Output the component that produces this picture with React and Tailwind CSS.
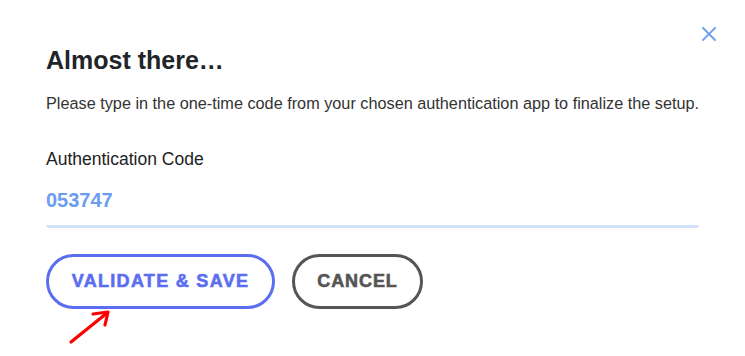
import React from "react";

export default function App() {
  return (
    <div className="relative w-[745px] h-[356px] bg-white overflow-hidden" style={{ fontFamily: '"Liberation Sans", Arial, sans-serif' }}>
      <button className="absolute right-[28px] top-[26px] text-[#6b9cf0]">
        <svg width="16" height="16" viewBox="0 0 16 16" fill="none" stroke="currentColor" strokeWidth="1.8" strokeLinecap="square">
          <path d="M2 2 L14 14 M14 2 L2 14" />
        </svg>
      </button>
      <div className="flex flex-col pl-[46px] pr-[46px] pt-[45px]">
        <h1 className="text-[25px] leading-[30px] font-bold text-[#212529]">Almost there…</h1>
        <p className="mt-[17px] text-[16.25px] leading-[22px] text-[#333] whitespace-nowrap">
          Please type in the one-time code from your chosen authentication app to finalize the setup.
        </p>
        <label className="mt-[33px] text-[17.5px] leading-[24px] text-[#222]">Authentication Code</label>
        <div className="mt-[17px] w-[653px] border-b-[3px] border-[#d4e3fc] rounded-b-[3px] pb-[13px]">
          <span className="block text-[20px] leading-[24px] font-bold text-[#6b9cf0]">053747</span>
        </div>
        <div className="mt-[26px] flex gap-[17px]">
          <button className="w-[229px] h-[55px] rounded-full border-[3px] border-[#5b6ef0] text-[#5b6ef0] text-[18px] font-bold tracking-[1.3px] uppercase [-webkit-text-stroke:0.6px_#5b6ef0]">
            Validate &amp; Save
          </button>
          <button className="w-[131px] h-[55px] rounded-full border-[3px] border-[#555] text-[#555] text-[18px] font-bold tracking-[0.9px] uppercase [-webkit-text-stroke:0.6px_#555]">
            Cancel
          </button>
        </div>
      </div>
      <svg className="absolute left-0 top-0" width="745" height="356" style={{ pointerEvents: "none" }}>
        <g stroke="#ff0000" strokeWidth="3.2" fill="none" strokeLinecap="round" strokeLinejoin="round">
          <path d="M71 342 L107 313" />
          <path d="M93 314 L108 312 L105 325" />
        </g>
      </svg>
    </div>
  );
}
